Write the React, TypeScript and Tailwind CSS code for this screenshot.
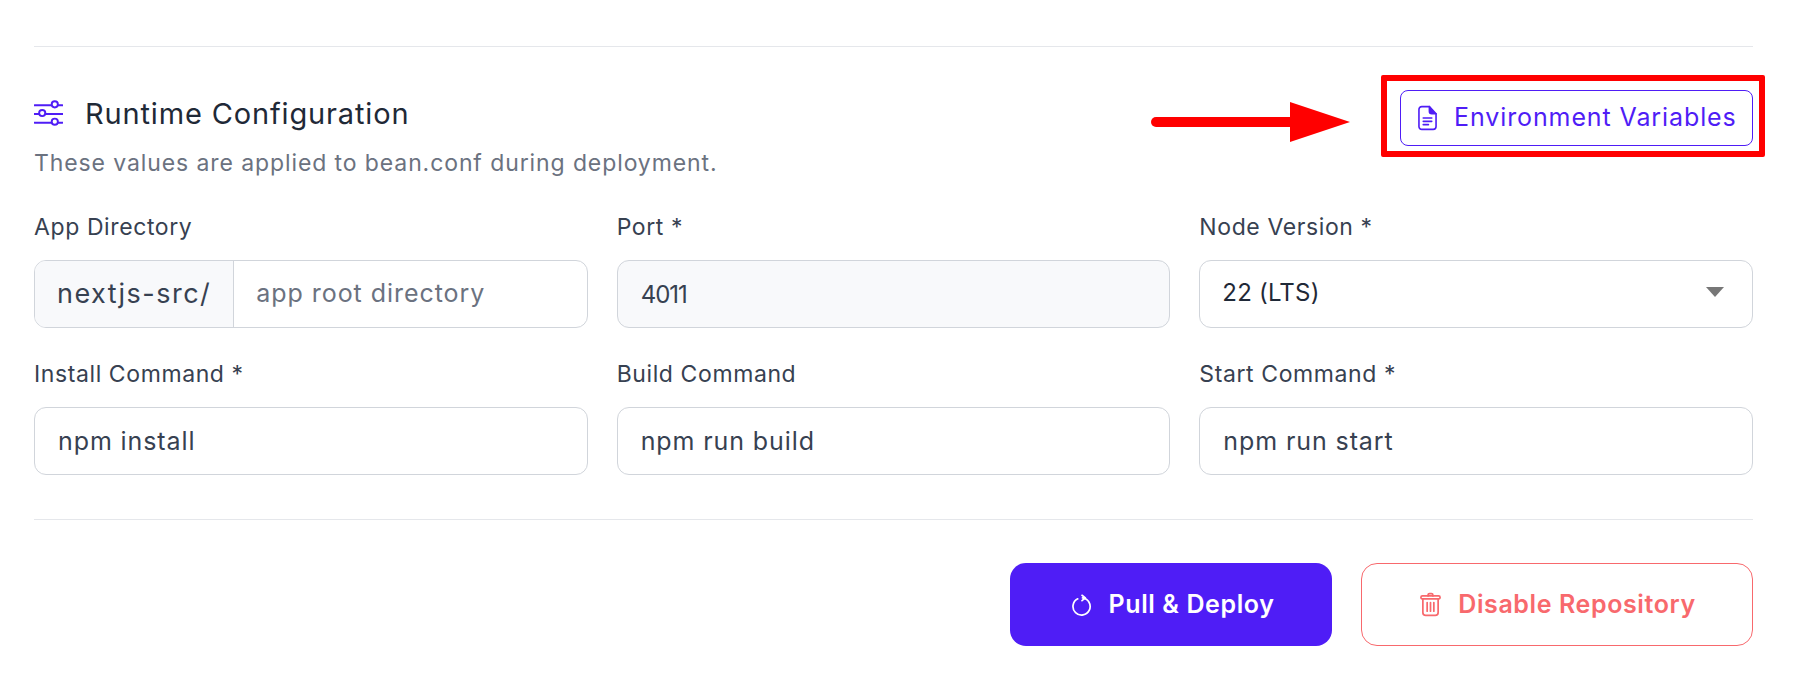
import React from "react";

const labelClass = "block h-[33px] mb-4 text-[23px] tracking-[0.6px] leading-[33px] text-[#374151]";
const inputClass =
  "w-full h-[68px] px-[23px] rounded-xl border border-[#d1d5db] text-[25px] tracking-[0.9px] text-[#374151] outline-none";

function SlidersIcon() {
  return (
    <svg width="29" height="28" viewBox="0 0 30 28" fill="none" stroke="#4f1df6" strokeWidth="2" className="shrink-0">
      <path d="M0.5 5h17.5M25 5h4.5M0.5 14h4.5M12 14h17.5M0.5 23h17.5M25 23h4.5" strokeLinecap="round" />
      <circle cx="21.5" cy="4" r="3.2" />
      <circle cx="8.5" cy="13" r="3.2" />
      <circle cx="21.5" cy="22" r="3.2" />
    </svg>
  );
}

function DocIcon() {
  return (
    <svg width="19" height="26" viewBox="0 0 20 26" fill="none" stroke="#4f1df6" strokeWidth="1.7" strokeLinejoin="round" strokeLinecap="round" className="shrink-0">
      <path d="M4 1h8l7 7.5V22a3 3 0 0 1-3 3H4a3 3 0 0 1-3-3V4a3 3 0 0 1 3-3z" />
      <path d="M12 1v5a2.500 2.500 0 0 0 2.500 2.500H19" fill="#4f1df6" />
      <path d="M5.500 13h9M5.500 16.500h9M5.500 20h5.500" />
    </svg>
  );
}

function RefreshIcon() {
  return (
    <svg width="20" height="22" viewBox="0 0 21 22" fill="none" stroke="#ffffff" strokeWidth="1.8" strokeLinecap="round" strokeLinejoin="round" className="shrink-0">
      <path d="M6 4.500a9 9 0 1 0 5-.9h2" />
      <path d="M10.500 0.800L14 3.600l-3.500 2.800" />
    </svg>
  );
}

function TrashIcon() {
  return (
    <svg width="21" height="25" viewBox="0 0 22 25" fill="none" stroke="#f8696d" strokeWidth="1.8" strokeLinecap="round" strokeLinejoin="round" className="shrink-0">
      <path d="M1 5a1.500 1.500 0 0 1 1.500-1.500h17A1.500 1.500 0 0 1 21 5v.5a1 1 0 0 1-1 1H2a1 1 0 0 1-1-1z" />
      <path d="M8.500 3.500V2.500a1.500 1.500 0 0 1 1.500-1.500h2a1.500 1.500 0 0 1 1.500 1.500v1" />
      <path d="M3 6.500V21a3 3 0 0 0 3 3h10a3 3 0 0 0 3-3V6.500" />
      <path d="M7.500 10.500v9M11 10.500v9M14.500 10.500v9" />
    </svg>
  );
}

function Field({ label, children }: { label: string; children: React.ReactNode }) {
  return (
    <div>
      <label className={labelClass}>{label}</label>
      {children}
    </div>
  );
}

export default function App() {
  return (
    <div className="w-full h-[688px] bg-white pt-[46px] pl-[34px] pr-[43px] font-['Inter',sans-serif]">
      <div className="border-t border-[#e5e7eb]" />

      <div className="flex items-start justify-between pt-[43px] mb-[31px]">
        <div>
          <div className="flex items-center gap-[22px] h-10 mt-1">
            <SlidersIcon />
            <h2 className="text-[29px] tracking-[0.85px] leading-10 text-[#1f2937]">Runtime Configuration</h2>
          </div>
          <p className="mt-[13px] text-[23px] tracking-[0.9px] leading-[33px] text-[#6b7280]">
            These values are applied to bean.conf during deployment.
          </p>
        </div>

        <div className="relative">
          <svg width="200" height="40" viewBox="0 0 200 40" className="absolute left-[-249px] top-[12px]" fill="#ff0000">
            <rect x="0" y="15" width="145" height="10" rx="5" />
            <polygon points="139,0 199,20 139,40" />
          </svg>
          <button className="flex items-center gap-[17px] w-[353px] h-[56px] pl-[17px] rounded-lg border border-[#4f1df6] text-[25px] tracking-[0.9px] text-[#4f1df6]">
            <DocIcon />
            Environment Variables
          </button>
          <div className="absolute -left-[19px] -right-[12px] -top-[15px] -bottom-[11px] border-[6px] border-[#ff0000] rounded-[2px]" />
        </div>
      </div>

      <div className="grid grid-cols-3 gap-x-[29px] gap-y-[30px]">
        <Field label="App Directory">
          <div className="flex h-[68px] rounded-xl border border-[#d1d5db] overflow-hidden">
            <span className="flex items-center px-[22px] bg-[#f8f9fb] border-r border-[#d1d5db] text-[27px] tracking-[1.5px] text-[#374151]">
              nextjs-src/
            </span>
            <input
              placeholder="app root directory"
              className="flex-1 min-w-0 px-[22px] text-[25px] tracking-[0.95px] text-[#374151] outline-none placeholder:text-[#6b7280]"
            />
          </div>
        </Field>
        <Field label="Port *">
          <input readOnly value="4011" className="w-full h-[68px] px-[23px] rounded-xl border border-[#d1d5db] bg-[#f8f9fb] text-[24px] tracking-[-1px] text-[#374151] outline-none" />
        </Field>
        <Field label="Node Version *">
          <div className="relative">
            <select defaultValue="22" className="w-full h-[68px] px-[22px] pb-[2px] rounded-xl border border-[#d1d5db] appearance-none bg-white text-[24px] tracking-[0.2px] text-[#1f2937] outline-none">
              <option value="22">22 (LTS)</option>
            </select>
            <svg width="18" height="10" viewBox="0 0 18 10" className="absolute right-[29px] top-[27px]" fill="#777777">
              <polygon points="0,0 18,0 9,10" />
            </svg>
          </div>
        </Field>
        <Field label="Install Command *">
          <input readOnly value="npm install" className={inputClass} />
        </Field>
        <Field label="Build Command">
          <input readOnly value="npm run build" className={inputClass} />
        </Field>
        <Field label="Start Command *">
          <input readOnly value="npm run start" className={inputClass} />
        </Field>
      </div>

      <div className="mt-11 border-t border-[#e5e7eb]" />

      <div className="flex justify-end gap-[29px] mt-[43px]">
        <button className="flex items-center justify-center gap-[17px] w-[322px] h-[83px] pl-[4px] rounded-2xl bg-[#4f1df6] text-[25px] tracking-[0.6px] font-semibold text-white">
          <RefreshIcon />
          Pull &amp; Deploy
        </button>
        <button className="flex items-center justify-center gap-[17px] w-[392px] h-[83px] pl-[2px] rounded-2xl border border-[#f8696d] text-[25px] tracking-[0.6px] font-semibold text-[#f8696d]">
          <TrashIcon />
          Disable Repository
        </button>
      </div>
    </div>
  );
}
